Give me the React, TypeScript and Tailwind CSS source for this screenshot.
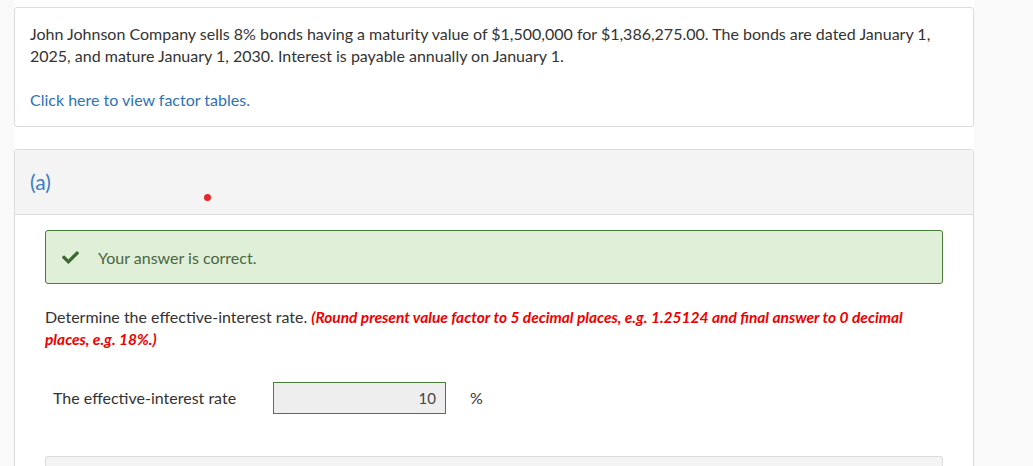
import { FaCheck } from "react-icons/fa";

export default function App() {
  return (
    <div className="h-[466px] w-full overflow-hidden bg-[#f9f9f9] font-['Lato',sans-serif] text-[16px] leading-[22px] text-[#333]">
      <div className="ml-[14px] h-full w-[960px] bg-white pt-[7px]">
        <ProblemCard />
        <PartCard />
      </div>
    </div>
  );
}

function ProblemCard() {
  return (
    <div className="rounded-[3px] border border-[#dcdcdc] px-[15px] pb-[15px] pt-[15px]">
      <p>
        John Johnson Company sells 8% bonds having a maturity value of $1,500,000 for $1,386,275.00. The bonds are dated
        January 1, 2025, and mature January 1, 2030. Interest is payable annually on January 1.
      </p>
      <p className="mt-[22px]">
        <a href="#" className="text-[#2f72b5]">
          Click here to view factor tables.
        </a>
      </p>
    </div>
  );
}

function PartCard() {
  return (
    <div className="mt-[22px] rounded-t-[3px] border border-b-0 border-[#dcdcdc]">
      <div className="relative flex h-[65px] items-center border-b border-[#dcdcdc] bg-[#f4f4f4] px-[15px]">
        <span className="text-[21px] text-[#3b7dc4]">(a)</span>
        <span className="absolute left-[189px] top-[44px] size-[7px] rounded-full bg-[#e8262b]" />
      </div>
      <div className="px-[30px] pt-[15px]">
        <div className="flex h-[54px] items-center rounded-[3px] border border-[#4a7c3a] bg-[#dfefd8] pl-[16px] text-[#4b6640]">
          <FaCheck className="size-[17px] text-[#3c6a2e]" />
          <span className="ml-[19px] pt-[2px]">Your answer is correct.</span>
        </div>
        <p className="mt-[22px] pr-[12px]">
          Determine the effective-interest rate.{" "}
          <em className="text-[15.5px] font-bold text-[#ee0000]">
            (Round present value factor to 5 decimal places, e.g. 1.25124 and final answer to 0 decimal places, e.g.
            18%.)
          </em>
        </p>
        <div className="mt-[32px] flex items-center">
          <span className="ml-[8px] w-[220px]">The effective-interest rate</span>
          <div className="flex h-[32px] w-[173px] items-center justify-end border border-[#4a7c3a] bg-[#eeeeee] px-[9px] text-[15px] text-[#444]">
            10
          </div>
          <span className="ml-[24px]">%</span>
        </div>
        <div className="mt-[42px] h-[20px] rounded-t-[3px] border border-b-0 border-[#dcdcdc] bg-[#f4f4f4]" />
      </div>
    </div>
  );
}
